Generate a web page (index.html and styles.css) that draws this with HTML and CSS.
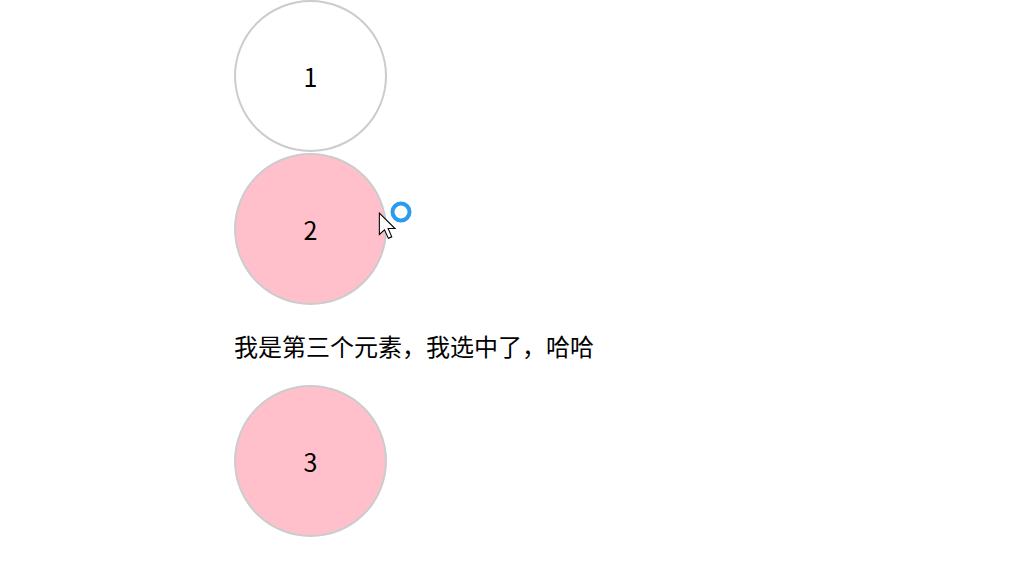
FILE: index.html
```html
<!DOCTYPE html>
<html lang="zh">
<head>
<meta charset="utf-8">
<title>nth-child</title>
<link rel="stylesheet" href="styles.css">
</head>
<body>
<div class="wrap">
  <div class="circle">1</div>
  <div class="circle pink">2</div>
  <p class="note">我是第三个元素，我选中了，哈哈</p>
  <div class="circle pink">3</div>
</div>
<div class="pointer">
  <svg class="arrow" width="22" height="30" viewBox="0 0 20 28">
    <path d="M1 1 L1 21 L5.8 16.6 L9.4 24.6 L12.6 23.2 L9.2 15.4 L15.6 15.4 Z" fill="#fff" stroke="#000" stroke-width="1" stroke-linejoin="miter"/>
  </svg>
  <svg class="ring" width="24" height="24" viewBox="0 0 24 24">
    <circle cx="12" cy="12" r="8.5" fill="none" stroke="#2b9bf0" stroke-width="4"/>
  </svg>
</div>
</body>
</html>
```

FILE: styles.css
```css
html, body {
  margin: 0;
  padding: 0;
  background: #fff;
}
body {
  font-family: "Noto Sans CJK SC", "Noto Sans", sans-serif;
  color: #000;
  position: relative;
  height: 569px;
  overflow: hidden;
}
.wrap {
  margin-left: 234px;
  display: flex;
  flex-direction: column;
  align-items: flex-start;
}
.circle {
  width: 149px;
  height: 148px;
  border: 2px solid #cccccc;
  border-radius: 50%;
  margin-bottom: 1px;
  display: flex;
  align-items: center;
  justify-content: center;
  font-size: 25px;
  line-height: 1;
  background: #fff;
}
.pink {
  background: #ffc0cb;
}
.note {
  margin: 24px 0 23px;
  font-size: 24px;
  line-height: 32px;
}
.pointer {
  position: absolute;
  left: 378px;
  top: 200px;
  width: 40px;
  height: 40px;
}
.arrow {
  position: absolute;
  left: 0;
  top: 12px;
}
.ring {
  position: absolute;
  left: 11px;
  top: 0;
}
```
